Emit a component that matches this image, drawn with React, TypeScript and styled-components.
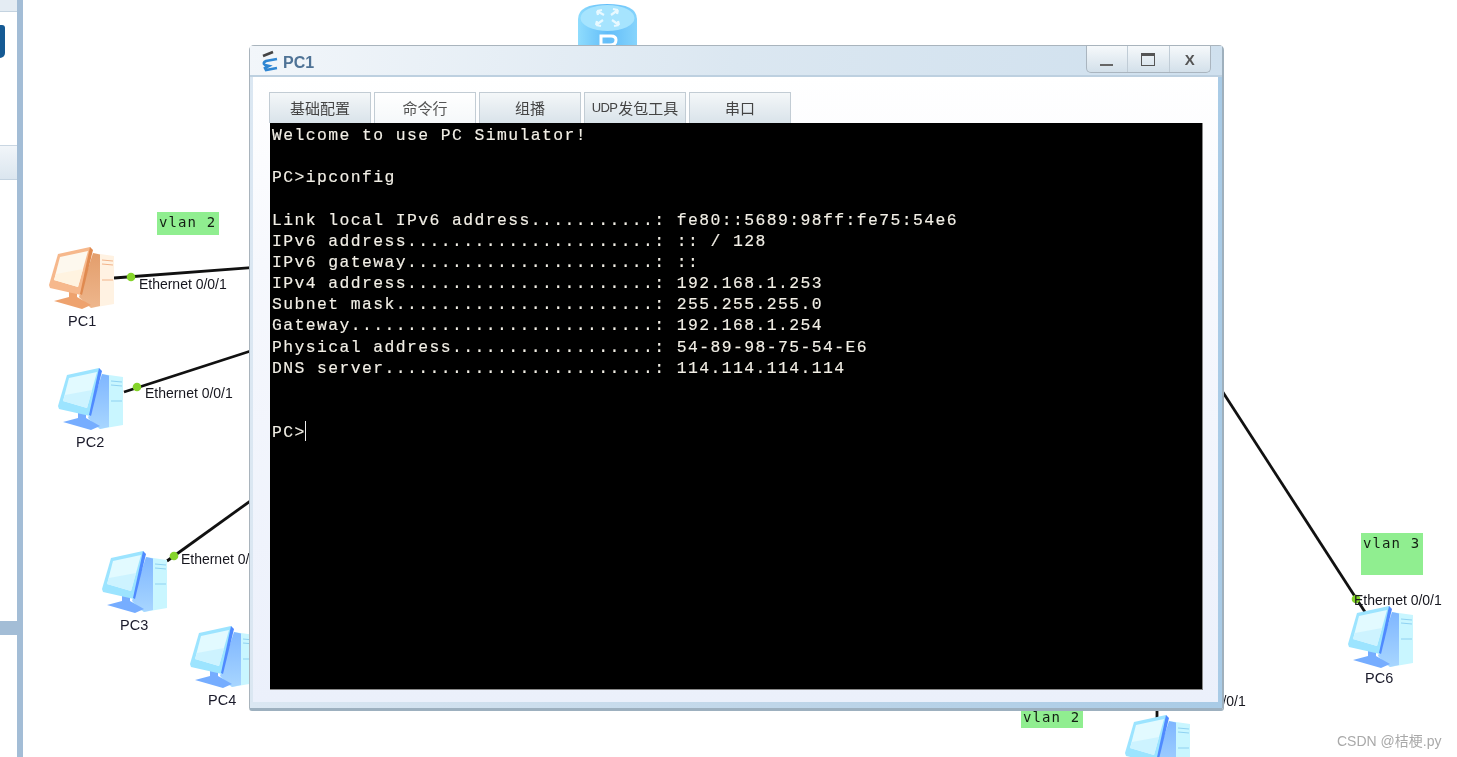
import React from "react";
import styled, { createGlobalStyle } from "styled-components";

const Global = createGlobalStyle`
  html, body { margin: 0; padding: 0; height: 100%; background: #fff; overflow: hidden; }
  #root { height: 100%; }
`;

const Page = styled.div`
  display: flex;
  width: 1457px;
  height: 757px;
  overflow: hidden;
  font-family: "Liberation Sans", Arial, sans-serif;
  background: #fff;
  filter: blur(0.35px);
`;

const Sidebar = styled.aside`
  flex: none;
  width: 17px;
  display: flex;
  flex-direction: column;
  border-right: 6px solid #a3bdd6;
`;
const SideTop = styled.div`
  height: 11px;
  flex: none;
  background: #e4ecf3;
  border-bottom: 1px solid #c4d3e0;
`;
const SideTools = styled.div`
  height: 133px;
  flex: none;
  padding-top: 13px;
  box-sizing: border-box;
`;
const SideIcon = styled.div`
  width: 5px;
  height: 33px;
  background: #155a94;
  border-radius: 0 3px 5px 0;
`;
const SideHeader = styled.div`
  height: 35px;
  flex: none;
  box-sizing: border-box;
  background: linear-gradient(#f1f5f9, #dbe6ef);
  border-top: 1px solid #c9d6e2;
  border-bottom: 1px solid #c4d3e0;
`;
const SideBody = styled.div`
  height: 441px;
  flex: none;
`;
const SideBand = styled.div`
  height: 14px;
  flex: none;
  background: #a3bdd6;
`;

const Canvas = styled.main`
  position: relative;
  flex: 1;
  overflow: hidden;
`;

const Wires = styled.svg`
  position: absolute;
  left: -23px;
  top: 0;
`;

const Node = styled.div<{ $x: number; $y: number }>`
  position: absolute;
  left: ${(p) => p.$x - 23}px;
  top: ${(p) => p.$y}px;
  width: 65px;
  height: 63px;
`;
const NodeName = styled.div<{ $x: number; $y: number }>`
  position: absolute;
  left: ${(p) => p.$x - 23}px;
  top: ${(p) => p.$y}px;
  font-size: 14.5px;
  line-height: 17px;
  color: #1b1b2b;
`;
const PortLabel = styled.div<{ $x: number; $y: number }>`
  position: absolute;
  left: ${(p) => p.$x - 23}px;
  top: ${(p) => p.$y}px;
  font-size: 14px;
  line-height: 16px;
  letter-spacing: -0.02px;
  color: #16161e;
  white-space: nowrap;
`;
const VlanNote = styled.div<{ $x: number; $y: number; $h: number }>`
  position: absolute;
  left: ${(p) => p.$x - 23}px;
  top: ${(p) => p.$y}px;
  width: 62px;
  height: ${(p) => p.$h}px;
  box-sizing: border-box;
  background: #90ee90;
  font-family: "DejaVu Sans Mono", monospace;
  font-size: 14px;
  line-height: 18px;
  letter-spacing: 1.1px;
  padding: 1px 0 0 2px;
  color: #141f14;
  white-space: pre;
`;
const Watermark = styled.div`
  position: absolute;
  left: 1314px;
  top: 732px;
  font-size: 14px;
  line-height: 18px;
  color: #a9a9a9;
  font-family: "Liberation Sans", "Noto Sans CJK SC", sans-serif;
  white-space: nowrap;
`;

const Window = styled.section`
  position: absolute;
  left: 226px;
  top: 45px;
  width: 975px;
  height: 666px;
  box-sizing: border-box;
  display: flex;
  flex-direction: column;
  padding: 0 4px 6px 3px;
  border: 1px solid #a9b4bd;
  border-right: 2px solid #9fb0bd;
  border-bottom: 3px solid #9db0bf;
  border-radius: 5px 5px 3px 3px;
  background: linear-gradient(90deg, #dbe7f2 0, #bcd4e8 60%, #a9cbe6 100%);
`;
const TitleBar = styled.header`
  flex: none;
  height: 29px;
  margin: 0 -4px 0 -3px;
  padding-left: 10px;
  display: flex;
  align-items: flex-start;
  border-bottom: 2px solid #bdd0e0;
  background: linear-gradient(100deg, #f2f6fa 0, #dbe7f1 50%, #cfe0ee 100%);
`;
const TitleIcon = styled.svg`
  flex: none;
  margin-top: 4px;
`;
const TitleText = styled.h1`
  margin: 7px 0 0 2px;
  font-size: 16px;
  line-height: 19px;
  font-weight: 700;
  color: #4f7396;
`;
const WinButtons = styled.div`
  margin-left: auto;
  margin-right: 11px;
  display: flex;
  height: 26px;
  border: 1px solid #aab5bf;
  border-top: none;
  border-radius: 0 0 5px 5px;
  background: linear-gradient(#f6f9fb, #d3e0ea);
`;
const WinButton = styled.div`
  width: 40.5px;
  display: flex;
  align-items: center;
  justify-content: center;
  color: #555;
  font-size: 15px;
  font-weight: 700;
  & + & { border-left: 1px solid #c0ccd6; }
`;
const MinGlyph = styled.span`
  width: 13px;
  height: 2px;
  background: #666;
  margin-top: 11px;
`;
const MaxGlyph = styled.span`
  width: 12px;
  height: 9px;
  border: 1px solid #555;
  border-top-width: 3px;
`;
const Content = styled.div`
  flex: 1;
  min-height: 0;
  display: flex;
  flex-direction: column;
  padding: 15px 15px 12px 16px;
  background: linear-gradient(180deg, #ffffff 0, #f6f8fd 30%, #ebf0fb 100%);
`;
const Tabs = styled.nav`
  flex: none;
  display: flex;
  gap: 3px;
  height: 31px;
`;
const Tab = styled.div<{ $active?: boolean }>`
  width: 102px;
  box-sizing: border-box;
  display: flex;
  align-items: center;
  justify-content: center;
  padding-bottom: 2px;
  font-family: "Noto Sans CJK SC", sans-serif;
  font-size: 15px;
  white-space: nowrap;
  color: ${(p) => (p.$active ? "#555" : "#444")};
  border: 1px solid #c2ccd4;
  border-bottom: none;
  background: ${(p) =>
    p.$active ? "linear-gradient(#ffffff, #f5f8fa)" : "linear-gradient(#f4f7f9, #d9e3ea)"};
`;
const TabSmallLatin = styled.span`
  font-family: "Liberation Sans", sans-serif;
  font-size: 13px;
  letter-spacing: -0.6px;
  margin-right: 1px;
`;
const Terminal = styled.pre`
  flex: 1;
  margin: 0 0 0 1px;
  min-height: 0;
  padding: 2px 0 0 2px;
  background: #000;
  color: #f2efe6;
  font-family: "Liberation Mono", "Courier New", monospace;
  font-size: 16.4px;
  line-height: 21.15px;
  letter-spacing: 1.41px;
  -webkit-text-stroke: 0.15px #f2efe6;
  border-right: 1px solid #888;
  border-bottom: 1px solid #888;
  overflow: hidden;
`;
const Caret = styled.span`
  display: inline-block;
  width: 1px;
  height: 20px;
  margin-left: -1px;
  background: #eee;
  vertical-align: -4px;
`;

function PcIcon({ orange, id }: { orange?: boolean; id: string }) {
  const c = orange
    ? { frame: "#f6b88c", screen: "#fdf8ee", screen2: "#fff3e0", dark: "#e08a50", side: "#e39e6c", side2: "#eeb68c", tower: "#fff2e2", base: "#eea26e", line: "#f2b48a" }
    : { frame: "#9ce4ff", screen: "#e2faff", screen2: "#cdf3ff", dark: "#4f8aff", side: "#7fb6ff", side2: "#a8d6ff", tower: "#c9f6ff", base: "#76adff", line: "#8fd2f2" };
  return (
    <svg width="65" height="63" viewBox="0 0 65 63">
      <defs>
        <linearGradient id={id} x1="0" y1="0" x2="0" y2="1">
          <stop offset="0" stopColor={c.side} />
          <stop offset="1" stopColor={c.side2} />
        </linearGradient>
      </defs>
      <path d="M44 6 L65 9 L65 57 L42 61 L30 54 Z" fill={c.tower} />
      <path d="M44 6 L51 7.5 L51 59 L42 61 L30 50 Z" fill={`url(#${id})`} />
      <path d="M5 54 L20 50 L20 43 L28 43 L28 50 L42 58 L33 62 Z" fill={c.base} />
      <path d="M53 13 L64 14 M53 17 L64 18 M53 33 L64 33" stroke={c.line} strokeWidth="1.2" />
      <path d="M9 7 L41 0 L43 3 L32 48 L1 41 L0 38 Z" fill={c.frame} />
      <path d="M41 0 L44 3 L33 48 L31 47 Z" fill={c.dark} />
      <path d="M11 10 L39 4 L29 40 L5 33 Z" fill={c.screen} />
      <path d="M7 27 L34 22 L29 40 L5 33 Z" fill={c.screen2} />
    </svg>
  );
}

const nodes = [
  { name: "PC1", x: 49, y: 247, nx: 68, ny: 313, orange: true, label: true },
  { name: "PC2", x: 58, y: 368, nx: 76, ny: 434, label: true },
  { name: "PC3", x: 102, y: 551, nx: 120, ny: 617, label: true },
  { name: "PC4", x: 190, y: 626, nx: 208, ny: 692, label: true },
  { name: "PC5", x: 1125, y: 715, nx: 0, ny: 0, label: false },
  { name: "PC6", x: 1348, y: 606, nx: 1365, ny: 670, label: true },
];

const ports = [
  { x: 139, y: 276, text: "Ethernet 0/0/1" },
  { x: 145, y: 385, text: "Ethernet 0/0/1" },
  { x: 181, y: 551, text: "Ethernet 0/0/1" },
  { x: 1354, y: 592, text: "Ethernet 0/0/1" },
  { x: 1158, y: 693, text: "Ethernet 0/0/1" },
];

const terminalText = `Welcome to use PC Simulator!

PC>ipconfig

Link local IPv6 address...........: fe80::5689:98ff:fe75:54e6
IPv6 address......................: :: / 128
IPv6 gateway......................: ::
IPv4 address......................: 192.168.1.253
Subnet mask.......................: 255.255.255.0
Gateway...........................: 192.168.1.254
Physical address..................: 54-89-98-75-54-E6
DNS server........................: 114.114.114.114


PC>`;

export default function App() {
  return (
    <Page>
      <Global />
      <Sidebar>
        <SideTop />
        <SideTools>
          <SideIcon />
        </SideTools>
        <SideHeader />
        <SideBody />
        <SideBand />
      </Sidebar>
      <Canvas>
        <Wires width="1457" height="757" viewBox="0 0 1457 757">
          <defs>
            <linearGradient id="routerBody" x1="0" y1="0" x2="1" y2="0">
              <stop offset="0" stopColor="#8fdcfd" />
              <stop offset="0.5" stopColor="#62bdf9" />
              <stop offset="1" stopColor="#86d4fc" />
            </linearGradient>
          </defs>
          <g stroke="#111" strokeWidth="2.8" fill="none">
            <path d="M114 278 L260 267" />
            <path d="M124 392 L260 348" />
            <path d="M167 561 L260 494" />
            <path d="M1215 380 L1365 612" />
            <path d="M1157 700 L1157 720" />
          </g>
          <g fill="#85d42a">
            <circle cx="131" cy="277" r="4.3" />
            <circle cx="137" cy="387" r="4.3" />
            <circle cx="174" cy="556" r="4.3" />
            <circle cx="1356" cy="599" r="4.3" />
          </g>
          <path d="M578 19 Q578 4 607 4 Q637 4 637 19 L637 50 L578 50 Z" fill="url(#routerBody)" />
          <ellipse cx="607.5" cy="18" rx="27" ry="13" fill="#a6e4fe" />
          <g stroke="#e8f9ff" strokeWidth="2.2" fill="none">
            <path d="M597 11 L604 15 M597 11 L602 10 M597 11 L598 15" />
            <path d="M618 10 L611 15 M618 10 L613 9 M618 10 L617 14" />
            <path d="M596 25 L603 20 M596 25 L601 26 M596 25 L597 21" />
            <path d="M619 25 L612 20 M619 25 L614 26 M619 25 L618 21" />
          </g>
          <path d="M601 48 L601 36 L611 36 Q616 36 616 40 Q616 45 610 45 L601 45" stroke="#fff" strokeWidth="3" fill="none" />
        </Wires>
        <VlanNote $x={157} $y={212} $h={23}>{"vlan 2"}</VlanNote>
        <VlanNote $x={1361} $y={533} $h={42}>{"vlan 3"}</VlanNote>
        <VlanNote $x={1021} $y={707} $h={21}>{"vlan 2"}</VlanNote>
        {nodes.map((n) => (
          <React.Fragment key={n.name}>
            <Node $x={n.x} $y={n.y}>
              <PcIcon orange={n.orange} id={`side-${n.name}`} />
            </Node>
            {n.label && <NodeName $x={n.nx} $y={n.ny}>{n.name}</NodeName>}
          </React.Fragment>
        ))}
        {ports.map((p) => (
          <PortLabel key={p.x} $x={p.x} $y={p.y}>{p.text}</PortLabel>
        ))}
        <Window>
          <TitleBar>
            <TitleIcon width="21" height="22" viewBox="0 0 21 22">
              <path d="M3 6 L13 2" stroke="#444" strokeWidth="2.6" fill="none" />
              <path d="M17 9 L6 11 Q2 13 5 15 L9 16 L5 18 L6 20 L17 18" stroke="#2f86d2" strokeWidth="2.6" fill="none" />
            </TitleIcon>
            <TitleText>PC1</TitleText>
            <WinButtons>
              <WinButton><MinGlyph /></WinButton>
              <WinButton><MaxGlyph /></WinButton>
              <WinButton>X</WinButton>
            </WinButtons>
          </TitleBar>
          <Content>
            <Tabs>
              <Tab>基础配置</Tab>
              <Tab $active>命令行</Tab>
              <Tab>组播</Tab>
              <Tab><TabSmallLatin>UDP</TabSmallLatin>发包工具</Tab>
              <Tab>串口</Tab>
            </Tabs>
            <Terminal>{terminalText}<Caret /></Terminal>
          </Content>
        </Window>
        <Watermark>CSDN @桔梗.py</Watermark>
      </Canvas>
    </Page>
  );
}
